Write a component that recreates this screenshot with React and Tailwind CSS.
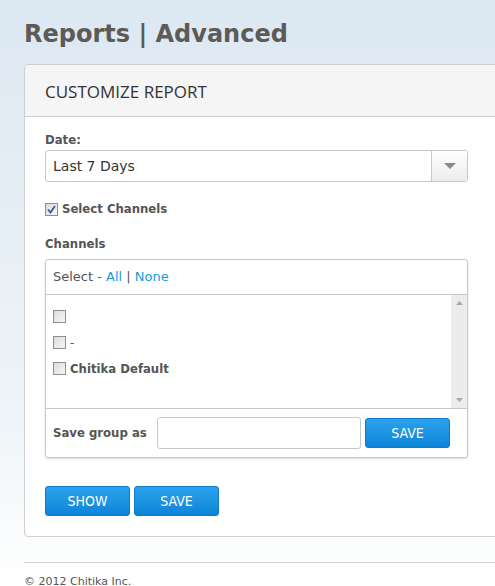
import React from "react";

const verdana = { fontFamily: '"DejaVu Sans", Verdana, sans-serif' };
const labelFont = { fontFamily: '"DejaVu Sans Condensed", "DejaVu Sans", sans-serif' };

function Box({ checked }) {
  return (
    <span className="inline-flex h-[13px] w-[13px] shrink-0 items-center justify-center border border-[#8e8f8f] bg-gradient-to-br from-[#dcdcdc] to-[#f6f6f6]">
      {checked && (
        <svg width="9" height="9" viewBox="0 0 9 9">
          <path d="M1 4.5 L3.5 7.5 L8 1" fill="none" stroke="#3a5a98" strokeWidth="1.8" />
        </svg>
      )}
    </span>
  );
}

function BlueButton({ children, className = "" }) {
  return (
    <button
      className={`h-[30px] w-[85px] rounded-[3px] border border-[#1078c4] bg-gradient-to-b from-[#2ba2ec] to-[#0b84d8] text-[14px] text-white ${className}`}
      style={labelFont}
    >
      {children}
    </button>
  );
}

export default function App() {
  return (
    <div
      className="h-[586px] w-[495px] overflow-hidden bg-gradient-to-b from-[#dce8f2] via-[#eef4f8] via-70% to-white pl-[24px] text-[#555]"
      style={verdana}
    >
      {/* ── Page title ── */}
      <h1 className="pt-[20px] text-[24px] font-bold leading-[28px] text-[#5e5a56]">Reports | Advanced</h1>

      {/* ── Customize panel ── */}
      <div className="mt-[16px] w-[500px] rounded-l-[4px] border border-[#cfcfcf] bg-white">
        <div
          className="flex h-[52px] items-center rounded-tl-[4px] border-b border-[#cfcfcf] bg-[#f5f5f5] pl-[20px] pt-[2px] text-[17px] text-[#333]"
          style={{ fontFamily: '"Open Sans", "DejaVu Sans", sans-serif' }}
        >
          CUSTOMIZE REPORT
        </div>

        <div className="w-[464px] pb-[20px] pl-[20px] pt-[15px]" style={labelFont}>
          <div className="text-[13px] font-bold leading-[16px]">Date:</div>
          <div className="mt-[2px] flex h-[32px] w-[423px] overflow-hidden rounded-[3px] border border-[#c8c8c8]" style={verdana}>
            <div className="flex flex-1 items-center pl-[7px] text-[14px] text-[#333]">Last 7 Days</div>
            <div className="flex w-[36px] items-center justify-center border-l border-[#c8c8c8] bg-gradient-to-b from-white to-[#ececec]">
              <svg width="12" height="6" viewBox="0 0 12 6">
                <path d="M0 0 H12 L6 6 Z" fill="#8a8a8a" />
              </svg>
            </div>
          </div>

          <label className="mt-[19px] flex h-[16px] items-center gap-[4px] text-[13px] font-bold">
            <Box checked />
            Select Channels
          </label>

          <div className="mt-[19px] text-[13px] font-bold leading-[16px]">Channels</div>

          <div className="mt-[7px] w-[423px] rounded-[3px] border border-[#c8c8c8] shadow-[0_1px_2px_rgba(0,0,0,0.15)]">
            <div className="flex h-[35px] items-center border-b border-[#c8c8c8] pl-[7px] text-[13px]" style={verdana}>
              Select -&nbsp;<span className="text-[#1b9ad8]">All</span>&nbsp;|&nbsp;<span className="text-[#1b9ad8]">None</span>
            </div>
            <div className="flex h-[114px] border-b border-[#c8c8c8]">
              <div className="flex flex-1 flex-col gap-[13px] pl-[7px] pt-[15px] text-[13px]">
                <div className="flex h-[13px] items-center">
                  <Box />
                </div>
                <div className="flex h-[13px] items-center gap-[4px]">
                  <Box />-
                </div>
                <div className="flex h-[13px] items-center gap-[4px] font-bold">
                  <Box />
                  Chitika Default
                </div>
              </div>
              <div className="flex w-[16px] flex-col items-center justify-between bg-[#ececec] py-[6px]">
                <svg width="7" height="4" viewBox="0 0 7 4">
                  <path d="M0 4 L3.5 0 L7 4 Z" fill="#a8a8a8" />
                </svg>
                <svg width="7" height="4" viewBox="0 0 7 4">
                  <path d="M0 0 L7 0 L3.5 4 Z" fill="#a8a8a8" />
                </svg>
              </div>
            </div>
            <div className="flex h-[48px] items-center pl-[7px]">
              <span className="w-[104px] whitespace-nowrap text-[13px] font-bold">Save group as</span>
              <div className="h-[32px] w-[204px] rounded-[3px] border border-[#c8c8c8] bg-white" />
              <BlueButton className="ml-[4px]">SAVE</BlueButton>
            </div>
          </div>

          <div className="mt-[28px] flex gap-[4px]">
            <BlueButton>SHOW</BlueButton>
            <BlueButton>SAVE</BlueButton>
          </div>
        </div>
      </div>

      {/* ── Footer ── */}
      <div className="mt-[25px] border-t border-[#d0d0d0] pt-[12px] text-[11px] leading-[13px] text-[#555]">© 2012 Chitika Inc.</div>
    </div>
  );
}
